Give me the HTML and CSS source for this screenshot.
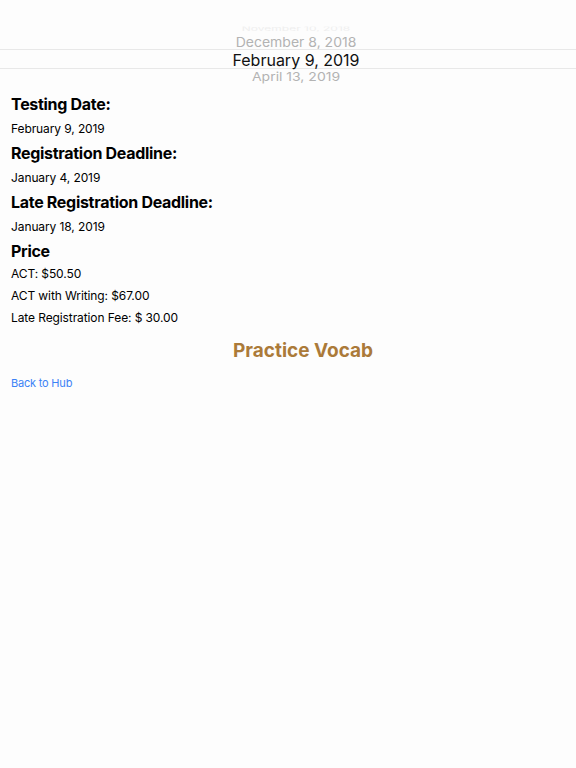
FILE: index.html
```
<!DOCTYPE html>
<html>
<head>
<meta charset="utf-8">
<link rel="stylesheet" href="styles.css">
</head>
<body>
<div class="picker">
  <div class="row r-far">November 10, 2018</div>
  <div class="row r-near">December 8, 2018</div>
  <div class="row r-sel">February 9, 2019</div>
  <div class="row r-below">April 13, 2019</div>
</div>
<div class="info">
  <div class="h">Testing Date:</div>
  <div class="t">February 9, 2019</div>
  <div class="h">Registration Deadline:</div>
  <div class="t">January 4, 2019</div>
  <div class="h">Late Registration Deadline:</div>
  <div class="t">January 18, 2019</div>
  <div class="h">Price</div>
  <div class="t p">ACT: $50.50</div>
  <div class="t p">ACT with Writing: $67.00</div>
  <div class="t p">Late Registration Fee: $ 30.00</div>
</div>
<div class="vocab">Practice Vocab</div>
<a class="back" href="#">Back to Hub</a>
</body>
</html>
```
FILE: styles.css
```
html, body {
  margin: 0;
  padding: 0;
  background: #fdfdfd;
  font-family: Inter, "Liberation Sans", sans-serif;
  color: #000;
}
.picker {
  display: flex;
  flex-direction: column;
  align-items: center;
  padding-top: 24px;
}
.row {
  text-align: center;
  width: 100%;
  box-sizing: border-box;
  padding-left: 16px;
}
.r-far {
  height: 10px;
  font-size: 12px;
  line-height: 10px;
  color: #efefef;
  overflow: hidden;
  transform: scaleY(0.5);
}
.r-near {
  height: 15px;
  font-size: 14px;
  line-height: 17px;
  color: #b3b3b3;
  transform: scaleY(0.92);
}
.r-sel {
  height: 20px;
  font-size: 16px;
  line-height: 20px;
  color: #111;
  border-top: 1px solid #e8e8e8;
  border-bottom: 1px solid #e8e8e8;
}
.r-below {
  height: 15px;
  font-size: 14px;
  line-height: 15px;
  color: #b3b3b3;
  transform: scaleY(0.88);
}
.info {
  display: flex;
  flex-direction: column;
  padding: 8px 11px 0;
}
.h {
  font-size: 16px;
  font-weight: 700;
  letter-spacing: -0.3px;
  line-height: 24px;
}
.t {
  font-size: 12px;
  letter-spacing: -0.1px;
  line-height: 25px;
}
.t.p {
  line-height: 22px;
}
.vocab {
  text-align: center;
  padding-left: 30px;
  margin-top: 6px;
  font-size: 19px;
  font-weight: 700;
  line-height: 32px;
  color: #ab7a39;
}
.back {
  display: block;
  margin: 8px 0 0 11px;
  font-size: 11px;
  letter-spacing: -0.2px;
  line-height: 16px;
  color: #3b82f6;
  text-decoration: none;
}
```
